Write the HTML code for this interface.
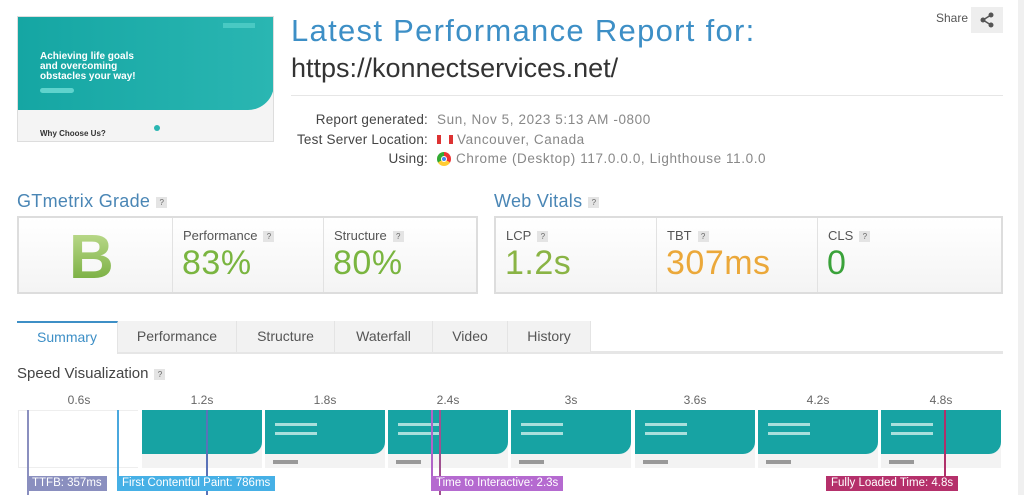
<!DOCTYPE html>
<html><head><meta charset="utf-8"><style>
*{margin:0;padding:0;box-sizing:border-box}
body{width:1024px;height:495px;overflow:hidden;background:#fff;font-family:"Liberation Sans",sans-serif;position:relative;color:#444}
.a{position:absolute;white-space:nowrap}
.q{display:inline-block;width:11px;height:11px;background:#e4e4e4;color:#666;font-size:8px;line-height:11px;text-align:center;vertical-align:middle;margin-left:6px;letter-spacing:0}
.box{position:absolute;border:2px solid #ddd;background:linear-gradient(#fff,#f4f4f4)}
.cell{position:absolute;top:0;bottom:0;border-right:1px solid #e2e2e2}
.lbl{position:absolute;left:10px;top:10px;font-size:13px;color:#555}
.val{position:absolute;left:9px;top:26px;font-size:34px;letter-spacing:.5px}
.tab{position:absolute;top:321px;height:31px;background:#f2f2f2;border-right:1px solid #e4e4e4;font-size:14px;color:#555;text-align:center;line-height:31px}
.fr{position:absolute;top:410px;width:120px;height:58px;background:#f3f3f3;overflow:hidden}
.fr .t{position:absolute;left:0;top:0;width:120px;height:44px;background:#17a3a3;border-bottom-right-radius:12px}
.fr .tx{position:absolute;left:10px;top:13px;width:42px;height:12px;border-top:3px solid #a9dfdc;border-bottom:3px solid #a9dfdc}
.fr .b{position:absolute;left:8px;top:50px;width:25px;height:4px;background:#999}
.tm{position:absolute;top:393px;font-size:12px;color:#666;text-align:center;width:60px}
.mk{position:absolute;top:476px;height:15px;font-size:11.5px;color:#fff;line-height:15px;padding:0 5px}
.vl{position:absolute;width:2px}
</style></head><body>
<div class="a" style="left:1018px;top:0;width:6px;height:495px;background:#f0f0f0"></div>

<div class="a" style="left:17px;top:16px;width:257px;height:126px;border:1px solid #ddd;background:#f4f4f4;overflow:hidden">
 <div class="a" style="left:0;top:0;width:256px;height:93px;background:linear-gradient(90deg,#15a6a3,#2ab6b2);border-bottom-right-radius:26px"></div>
 <div class="a" style="left:22px;top:35px;color:#fff;font-weight:bold;font-size:10px;line-height:10px">Achieving life goals<br>and overcoming<br>obstacles your way!</div>
 <div class="a" style="left:22px;top:71px;width:34px;height:5px;border-radius:3px;background:#5fd3cd"></div>
 <div class="a" style="left:205px;top:6px;width:32px;height:5px;background:#49c9c3"></div>
 <div class="a" style="left:22px;top:112px;font-size:8px;font-weight:bold;color:#333">Why Choose Us?</div>
 <div class="a" style="left:136px;top:108px;width:6px;height:6px;border-radius:50%;background:#2ab6b2"></div>
</div>

<div class="a" style="left:291px;top:13px;font-size:31px;color:#3d8fc6;letter-spacing:1.3px">Latest Performance Report for:</div>
<div class="a" style="left:291px;top:53px;font-size:27px;color:#333">https://konnectservices.net/</div>
<div class="a" style="left:291px;top:95px;width:712px;height:1px;background:#e6e6e6"></div>

<div class="a" style="left:220px;top:110px;width:208px;text-align:right;font-size:13.5px;color:#444;line-height:19.5px;letter-spacing:.2px">Report generated:<br>Test Server Location:<br>Using:</div>
<div class="a" style="left:437px;top:110px;font-size:13.5px;color:#888;line-height:19.5px;letter-spacing:.6px">Sun, Nov 5, 2023 5:13 AM -0800<br><span style="display:inline-block;width:16px;height:9px;background:linear-gradient(90deg,#d33 0 4px,#fff 4px 12px,#d33 12px);vertical-align:middle;margin-right:4px"></span>Vancouver, Canada<br><span style="display:inline-block;width:14px;height:14px;border-radius:50%;background:conic-gradient(#e33 0 120deg,#fc3 120deg 240deg,#3a3 240deg);vertical-align:middle;margin-right:5px;position:relative"><span style="position:absolute;left:4px;top:4px;width:6px;height:6px;border-radius:50%;background:#4285f4;border:1px solid #fff"></span></span>Chrome (Desktop) 117.0.0.0, Lighthouse 11.0.0</div>

<div class="a" style="left:936px;top:11px;font-size:12px;color:#555">Share</div>
<div class="a" style="left:971px;top:7px;width:32px;height:26px;background:#eee">
<svg width="32" height="26"><g fill="#555"><circle cx="20" cy="8" r="2.5"/><circle cx="12" cy="13" r="2.5"/><circle cx="20" cy="18" r="2.5"/></g><path d="M20 8L12 13L20 18" stroke="#555" stroke-width="1.5" fill="none"/></svg></div>

<div class="a" style="left:17px;top:191px;font-size:18px;color:#4a86b5;letter-spacing:.3px">GTmetrix Grade<span class="q">?</span></div>
<div class="box" style="left:17px;top:216px;width:461px;height:78px">
 <div class="cell" style="left:0;width:154px"><div class="a" style="left:50px;top:4px;font-size:62px;font-weight:bold;background:linear-gradient(#c8e29a,#6aa530);-webkit-background-clip:text;color:transparent">B</div></div>
 <div class="cell" style="left:154px;width:151px"><div class="lbl">Performance<span class="q">?</span></div><div class="val" style="color:#7ab540">83%</div></div>
 <div class="cell" style="left:305px;width:152px;border:0"><div class="lbl">Structure<span class="q">?</span></div><div class="val" style="color:#7ab540">80%</div></div>
</div>

<div class="a" style="left:494px;top:191px;font-size:18px;color:#4a86b5;letter-spacing:.3px">Web Vitals<span class="q">?</span></div>
<div class="box" style="left:494px;top:216px;width:509px;height:78px">
 <div class="cell" style="left:0;width:161px"><div class="lbl">LCP<span class="q">?</span></div><div class="val" style="color:#8ab445">1.2s</div></div>
 <div class="cell" style="left:161px;width:161px"><div class="lbl">TBT<span class="q">?</span></div><div class="val" style="color:#eba83a">307ms</div></div>
 <div class="cell" style="left:322px;width:183px;border:0"><div class="lbl">CLS<span class="q">?</span></div><div class="val" style="color:#3aa23a">0</div></div>
</div>

<div class="a" style="left:17px;top:351px;width:986px;height:3px;background:#e6e6e6"></div>
<div class="tab" style="left:17px;width:101px;background:#fff;border-top:2px solid #3d8fc6;color:#3d8fc6;height:33px;line-height:29px">Summary</div>
<div class="tab" style="left:118px;width:119px">Performance</div>
<div class="tab" style="left:237px;width:98px">Structure</div>
<div class="tab" style="left:335px;width:98px">Waterfall</div>
<div class="tab" style="left:433px;width:75px">Video</div>
<div class="tab" style="left:508px;width:83px">History</div>

<div class="a" style="left:17px;top:365px;font-size:15px;color:#444">Speed Visualization<span class="q">?</span></div>

<div class="tm" style="left:49px">0.6s</div>
<div class="tm" style="left:172px">1.2s</div>
<div class="tm" style="left:295px">1.8s</div>
<div class="tm" style="left:418px">2.4s</div>
<div class="tm" style="left:541px">3s</div>
<div class="tm" style="left:665px">3.6s</div>
<div class="tm" style="left:788px">4.2s</div>
<div class="tm" style="left:911px">4.8s</div>

<div class="a" style="left:18px;top:410px;width:120px;height:58px;border:1px solid #eee;border-right:0;background:#fff"></div>
<div class="fr" style="left:142px"><div class="t"></div></div>
<div class="fr" style="left:265px"><div class="t"></div><div class="tx"></div><div class="b"></div></div>
<div class="fr" style="left:388px"><div class="t"></div><div class="tx"></div><div class="b"></div></div>
<div class="fr" style="left:511px"><div class="t"></div><div class="tx"></div><div class="b"></div></div>
<div class="fr" style="left:635px"><div class="t"></div><div class="tx"></div><div class="b"></div></div>
<div class="fr" style="left:758px"><div class="t"></div><div class="tx"></div><div class="b"></div></div>
<div class="fr" style="left:881px"><div class="t"></div><div class="tx"></div><div class="b"></div></div>

<div class="vl" style="left:27px;top:410px;height:85px;background:#8a8fbf"></div>
<div class="vl" style="left:117px;top:410px;height:80px;background:#4aa8de"></div>
<div class="vl" style="left:206px;top:410px;height:85px;background:#5a72b8"></div>
<div class="vl" style="left:431px;top:410px;height:80px;background:#b064c8"></div>
<div class="vl" style="left:439px;top:410px;height:85px;background:#a05090"></div>
<div class="vl" style="left:944px;top:410px;height:80px;background:#b0306a"></div>

<div class="mk" style="left:27px;background:#8a8fbf">TTFB: 357ms</div>
<div class="mk" style="left:117px;background:#46b0e6">First Contentful Paint: 786ms</div>
<div class="mk" style="left:431px;background:#b56ad0">Time to Interactive: 2.3s</div>
<div class="mk" style="left:826px;background:#b5306b">Fully Loaded Time: 4.8s</div>
</body></html>
